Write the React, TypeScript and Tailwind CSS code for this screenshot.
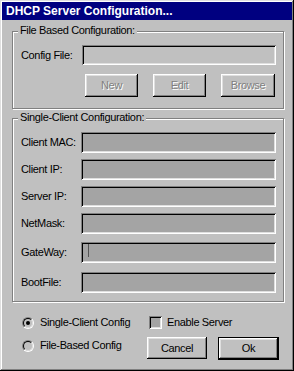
const sunken =
  "shadow-[inset_1px_1px_0_#808080,inset_-1px_-1px_0_#ffffff,inset_2px_2px_0_#000000,inset_-2px_-2px_0_#dfdfdf]"
const raised =
  "shadow-[inset_-1px_-1px_0_#000000,inset_1px_1px_0_#ffffff,inset_-2px_-2px_0_#808080,inset_2px_2px_0_#dfdfdf]"
const etched = "border border-[#808080] shadow-[inset_1px_1px_0_#ffffff,1px_1px_0_#ffffff]"
const disabledText = "text-[#808080] [text-shadow:1px_1px_0_#ffffff]"

const fields = [
  { label: "Client MAC:", mt: "mt-0" },
  { label: "Client IP:", mt: "mt-[6px]" },
  { label: "Server IP:", mt: "mt-[6px]" },
  { label: "NetMask:", mt: "mt-[6px]" },
  { label: "GateWay:", mt: "mt-[8px]", caret: true },
  { label: "BootFile:", mt: "mt-[9px]" },
]

function Legend({ children }: { children: string }) {
  return (
    <span className="absolute left-[5px] top-[-8px] px-[2px] bg-[#c0c0c0] leading-[13px]">{children}</span>
  )
}

function Radio({ checked, label }: { checked?: boolean; label: string }) {
  return (
    <div className="flex items-center gap-[6px] h-[13px]">
      <span className="relative w-[12px] h-[12px] rounded-full border border-t-[#808080] border-l-[#808080] border-b-white border-r-white">
        <span className="absolute inset-0 rounded-full border border-t-black border-l-black border-b-[#dfdfdf] border-r-[#dfdfdf] bg-[#c0c0c0] flex items-center justify-center">
          {checked && <span className="w-[4px] h-[4px] rounded-full bg-black" />}
        </span>
      </span>
      <span className="leading-[13px]">{label}</span>
    </div>
  )
}

function ActionButton({ label, width }: { label: string; width: string }) {
  return (
    <div className={`${width} h-[23px] bg-[#c0c0c0] ${raised} flex items-center justify-center ${disabledText}`}>
      {label}
    </div>
  )
}

export default function App() {
  return (
    <div
      className={`w-[294px] h-[371px] bg-[#c0c0c0] p-[2px] font-['Liberation_Sans',Arial,sans-serif] text-[11px] tracking-[-0.35px] text-black shadow-[inset_-1px_-1px_0_#000000,inset_1px_1px_0_#dfdfdf,inset_-2px_-2px_0_#808080,inset_2px_2px_0_#ffffff]`}
    >
      <div className="h-[18px] bg-[#000080] pl-[4px] flex items-center text-white font-bold text-[12px] tracking-normal">
        DHCP Server Configuration...
      </div>

      <div className={`relative mt-[11px] ml-[10px] w-[272px] ${etched} pt-[13px] pb-[11px] pl-[8px]`}>
        <Legend>File Based Configuration:</Legend>
        <div className="flex items-center">
          <span className="w-[61px]">Config File:</span>
          <div className={`w-[194px] h-[20px] bg-[#c0c0c0] ${sunken}`} />
        </div>
        <div className="ml-[64px] mt-[9px] w-[190px] flex justify-between">
          <ActionButton label="New" width="w-[53px]" />
          <ActionButton label="Edit" width="w-[53px]" />
          <ActionButton label="Browse" width="w-[54px]" />
        </div>
      </div>

      <div className={`relative mt-[9px] ml-[10px] w-[272px] ${etched} pt-[13px] pb-[8px] pl-[8px]`}>
        <Legend>Single-Client Configuration:</Legend>
        {fields.map((f) => (
          <div key={f.label} className={`flex items-center ${f.mt}`}>
            <span className="w-[60px]">{f.label}</span>
            <div className={`relative w-[195px] h-[21px] bg-[#a4a4a4] ${sunken}`}>
              {f.caret && <span className="absolute left-[7px] top-[2px] w-[1px] h-[13px] bg-[#555555]" />}
            </div>
          </div>
        ))}
      </div>

      <div className="flex mt-[14px] pl-[20px]">
        <div className="w-[125px] flex flex-col gap-[10px]">
          <Radio checked label="Single-Client Config" />
          <div className="mt-[0px]">
            <Radio label="File-Based Config" />
          </div>
        </div>
        <div className="flex flex-col">
          <div className="flex items-center gap-[5px] ml-[2px] h-[13px]">
            <span className={`w-[13px] h-[13px] bg-[#a4a4a4] ${sunken}`} />
            <span className="leading-[13px]">Enable Server</span>
          </div>
          <div className="flex gap-[11px] mt-[8px]">
            <div className={`w-[60px] h-[22px] bg-[#c0c0c0] ${raised} flex items-center justify-center`}>Cancel</div>
            <div className="w-[61px] h-[23px] border border-black">
              <div className={`w-full h-full bg-[#c0c0c0] ${raised} flex items-center justify-center`}>Ok</div>
            </div>
          </div>
        </div>
      </div>
    </div>
  )
}
